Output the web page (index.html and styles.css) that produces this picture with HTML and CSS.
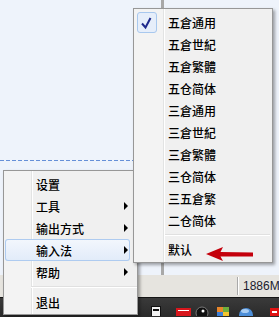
FILE: index.html
```html
<!DOCTYPE html>
<html lang="zh">
<head>
<meta charset="UTF-8">
<title>输入法菜单</title>
<link rel="stylesheet" href="styles.css">
</head>
<body>
<div class="screen">
  <div class="workspace">
    <div class="pane-left"><div class="dash"></div></div>
    <div class="splitter"></div>
    <div class="pane-right"></div>
  </div>
  <div class="statusbar"><span class="mem">1886M</span></div>
  <div class="taskbar">
    <svg class="tray" width="279" height="19" viewBox="0 0 279 19">
      <rect x="151.5" y="9.5" width="9" height="10" fill="#f2f2f2" stroke="#111"/>
      <rect x="153" y="12" width="6" height="2" fill="#111"/>
      <rect x="176" y="11" width="15" height="9" fill="#d8161c"/>
      <rect x="178" y="13" width="11" height="1" fill="#fff"/>
      <circle cx="202" cy="16" r="6" fill="#111" stroke="#777"/>
      <circle cx="203" cy="14" r="1.5" fill="#fff"/>
      <rect x="217" y="10" width="6" height="5" fill="#e8862a"/>
      <rect x="223" y="10" width="6" height="5" fill="#6fae3c"/>
      <rect x="217" y="15" width="6" height="5" fill="#3d7fd6"/>
      <rect x="223" y="15" width="6" height="5" fill="#f3c52f"/>
      <circle cx="246" cy="18" r="7" fill="#4d8fd9"/>
      <ellipse cx="245" cy="14" rx="4" ry="2" fill="#a9cdf2"/>
      <rect x="270" y="11" width="9" height="9" fill="#e01414"/>
      <rect x="272" y="14" width="5" height="2" fill="#fff"/>
    </svg>
  </div>

  <ul class="menu main-menu">
    <li>设置</li>
    <li class="has-sub">工具</li>
    <li class="has-sub">输出方式</li>
    <li class="has-sub active">输入法</li>
    <li class="has-sub">帮助</li>
    <li class="sep"></li>
    <li>退出</li>
  </ul>

  <ul class="menu sub-menu">
    <li><span class="check"><svg width="18" height="19" viewBox="0 0 18 19"><path d="M4 10.5 L7.5 14.5 L12.5 5" fill="none" stroke="#1f2a8c" stroke-width="2"/></svg></span>五倉通用</li>
    <li>五倉世紀</li>
    <li>五倉繁體</li>
    <li>五仓简体</li>
    <li>三倉通用</li>
    <li>三倉世紀</li>
    <li>三倉繁體</li>
    <li>三仓简体</li>
    <li>三五倉繁</li>
    <li>二仓简体</li>
    <li class="sep"></li>
    <li>默认</li>
  </ul>

  <svg class="pointer" width="52" height="20" viewBox="0 0 52 20">
    <path d="M2 10 L19 3 L16.5 8 L49 8.5 L49 12.5 L16.5 12.5 L19 17 Z" fill="#c4000c"/>
  </svg>
</div>
</body>
</html>
```

FILE: styles.css
```css
* {
box-sizing: border-box;
}
body {
margin: 0;
width: 279px;
height: 317px;
overflow: hidden;
background-color: #eef3fb;
font-family: "Noto Sans CJK SC", sans-serif;
}
.screen {
position: relative;
height: 317px;
display: flex;
flex-direction: column;
}
.workspace {
display: flex;
height: 275px;
}
.pane-left {
width: 161px;
}
.dash {
margin-top: 160px;
height: 1px;
background: repeating-linear-gradient(to right, #6690d8 0 4px, transparent 4px 6px);
}
.splitter {
width: 3px;
background-color: #a8a8a8;
}
.pane-right {
flex: 1;
}

.statusbar {
height: 22px;
background-color: #e6e4df;
display: flex;
justify-content: flex-end;
padding-top: 2px;
}
.mem {
width: 42px;
height: 18px;
border-left: 1px solid #a9a9a9;
box-shadow: inset 1px 0 #fff;
padding-left: 5px;
font: 12px/18px "Liberation Sans", sans-serif;
color: #1b1b2e;
white-space: nowrap;
overflow: hidden;
}
.taskbar {
flex: 1;
background: linear-gradient(#3a3a3a, #2a2a2a);
border-top: 1px solid #151515;
}
.tray {
display: block;
margin-top: -1px;
}

/* popup menus */
.menu {
position: absolute;
margin: 0;
list-style: none;
border: 1px solid #979797;
box-shadow: 2px 2px 3px rgba(0, 0, 0, 0.35);
font-size: 12px;
font-weight: 500;
color: #000;
}
.menu li {
height: 22px;
display: flex;
align-items: center;
white-space: nowrap;
}
.main-menu {
left: 3px;
top: 170px;
width: 135px;
padding: 2px 7px 1px 1px;
background: linear-gradient(to right, #f3f3f3 0 27px, #e2e3e3 27px 28px, #fff 28px 29px, #f0f0f0 29px);
}
.main-menu li {
padding-left: 31px;
}
.main-menu .has-sub::after {
content: "";
margin-left: auto;
margin-right: 2px;
border-left: 4px solid #000;
border-top: 4px solid transparent;
border-bottom: 4px solid transparent;
}
.main-menu .active {
border-radius: 3px;
background: linear-gradient(#f3f7fd, #e1ebf9);
box-shadow: inset 0 0 0 1px #aecbf0;
}
.main-menu .sep {
height: 8px;
margin-left: 26px;
margin-right: -7px;
}
.sub-menu {
left: 133px;
top: 8px;
width: 140px;
padding: 2px;
background: linear-gradient(to right, #f3f3f3 0 29px, #e2e3e3 29px 30px, #fff 30px 31px, #f0f0f0 31px);
}
.sub-menu li {
padding-left: 32px;
}
.sub-menu .sep {
height: 7px;
margin-left: 29px;
padding: 0;
}
.menu .sep {
background:
linear-gradient(#e0e0e0, #e0e0e0) 0 3px / 100% 1px no-repeat,
linear-gradient(#fff, #fff) 0 4px / 100% 1px no-repeat;
}
.check {
display: flex;
align-items: center;
justify-content: center;
width: 20px;
height: 21px;
margin-left: -31px;
margin-right: 11px;
border: 1px solid #a8c8ee;
border-radius: 3px;
background-color: #e6eefa;
}
.pointer {
position: absolute;
left: 204px;
top: 244px;
}
```
